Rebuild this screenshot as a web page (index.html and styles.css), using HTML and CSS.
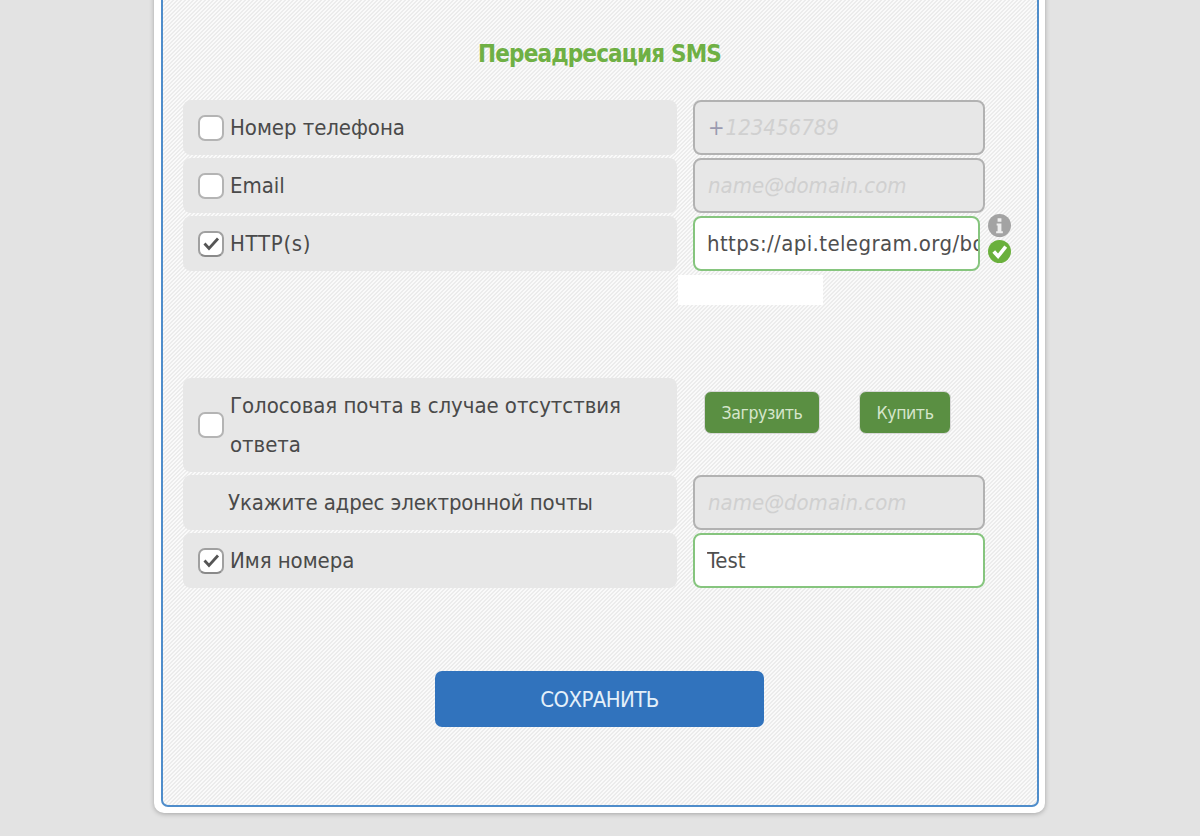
FILE: index.html
```html
<!DOCTYPE html>
<html lang="ru">
<head>
<meta charset="utf-8">
<title>Переадресация SMS</title>
<link rel="stylesheet" href="styles.css">
</head>
<body>
<main class="card">
  <div class="panel">
    <h1 class="title">Переадресация SMS</h1>
    <section class="rows">
      <div class="row">
        <label class="label"><span class="check"></span>Номер телефона</label>
        <div class="field"><div class="input off"><span class="plus">+</span><span class="ph">123456789</span></div></div>
      </div>
      <div class="row">
        <label class="label"><span class="check"></span>Email</label>
        <div class="field"><div class="input off"><span class="ph">name@domain.com</span></div></div>
      </div>
      <div class="row">
        <label class="label"><span class="check checked"><svg viewBox="0 0 26 26" class="tick"><path d="M6.500 12.500l4.500 5 9-10" fill="none" stroke="#555" stroke-width="2.800"/></svg></span><span class="wide">HTTP(s)</span></label>
        <div class="field">
          <div class="input on short"><span class="clip url">https://api.telegram.org/bot</span></div>
          <div class="status">
            <svg class="ic" viewBox="0 0 24 24"><circle cx="12" cy="12" r="12" fill="#a3a3a3"/><path d="M10 4.500h4v3.600h-4zM9 10h5v8h1.500v2h-7v-2H10v-6H9z" fill="#eee"/></svg>
            <svg class="ic" viewBox="0 0 24 24"><circle cx="12" cy="12" r="12" fill="#6ab03c"/><path d="M6 12l4.500 5L18.500 7" fill="none" stroke="#fff" stroke-width="3.800"/></svg>
          </div>
        </div>
      </div>
    </section>
    <div class="patch"></div>
    <section class="rows lower">
      <div class="row">
        <label class="label tall"><span class="check"></span><span>Голосовая почта в случае отсутствия ответа</span></label>
        <div class="actions">
          <button class="small load">Загрузить</button>
          <button class="small buy">Купить</button>
        </div>
      </div>
      <div class="row">
        <label class="label plain">Укажите адрес электронной почты</label>
        <div class="field"><div class="input off"><span class="ph">name@domain.com</span></div></div>
      </div>
      <div class="row">
        <label class="label"><span class="check checked"><svg viewBox="0 0 26 26" class="tick"><path d="M6.500 12.500l4.500 5 9-10" fill="none" stroke="#555" stroke-width="2.800"/></svg></span>Имя номера</label>
        <div class="field"><div class="input on"><span class="clip">Test</span></div></div>
      </div>
    </section>
    <div class="save-wrap"><button class="save">СОХРАНИТЬ</button></div>
  </div>
</main>
</body>
</html>
```
FILE: styles.css
```css
* { box-sizing: border-box; }
html, body { height: 836px; overflow: hidden; }
body {
  margin: 0;
  background: #e3e3e3;
  font-family: "DejaVu Sans Condensed", "DejaVu Sans", sans-serif;
  color: #4a4a4a;
}
.card {
  width: 891px;
  height: 833px;
  margin: -20px 0 0 154px;
  padding: 7px 6px 6px 7px;
  background: #fff;
  border-radius: 10px;
  box-shadow: 0 1px 5px rgba(0,0,0,.28);
}
.panel {
  height: 100%;
  padding: 0 21px 0 20px;
  border: 2px solid #4f8dcb;
  border-radius: 7px;
  background-color: #fafafa;
  background-image: linear-gradient(135deg, #ececec 25%, #fafafa 25%, #fafafa 50%, #ececec 50%, #ececec 75%, #fafafa 75%);
  background-size: 4px 4px;
}
.title {
  margin: 0;
  padding-top: 48px;
  height: 111px;
  font-size: 24px;
  line-height: 34px;
  font-weight: bold;
  text-align: center;
  color: #6fb044;
  letter-spacing: -.85px;
}
.rows { display: flex; flex-direction: column; gap: 3px; }
.lower { margin-top: 73px; }
.row { display: flex; gap: 16px; min-height: 55px; }
.label {
  width: 494px;
  flex: none;
  min-height: 55px;
  display: flex;
  align-items: center;
  gap: 6px;
  padding-left: 15px;
  padding-right: 40px;
  border-radius: 8px;
  background: #e7e7e7;
  font-size: 22px;
  line-height: 39px;
  letter-spacing: -.05px;
}
.tall { padding-top: 8px; padding-bottom: 8px; }
.plain { padding-left: 45px; letter-spacing: -.15px; }
.wide { letter-spacing: .7px; }
.check {
  flex: none;
  position: relative;
  width: 26px;
  height: 26px;
  background: #fff;
  border: 2px solid #b4b4b4;
  border-radius: 7px;
}
.checked { border-color: #a0a0a0; border-bottom-color: #8a8a8a; }
.tick { position: absolute; left: -2px; top: -2px; width: 26px; height: 26px; }
.field { display: flex; align-items: flex-start; width: 292px; }
.input {
  width: 292px;
  height: 55px;
  display: flex;
  align-items: center;
  border-radius: 8px;
  font-size: 22px;
  white-space: nowrap;
}
.off { padding: 0 13px; background: #e7e7e7; border: 2px solid #b2b2b2; }
.on { padding: 0 12px; background: #fff; border: 2px solid #86c57e; color: #4f4f4f; }
.short { width: 287px; flex: none; padding-right: 0; }
.clip { display: block; overflow: hidden; width: 100%; }
.url { letter-spacing: .4px; }
.ph { color: #d0d0d0; font-style: italic; }
.plus { color: #9a9ab0; margin-right: 1px; }
.status { flex: none; width: 23px; margin: -2px 0 0 8px; display: flex; flex-direction: column; gap: 3px; }
.ic { display: block; width: 23px; height: 23px; }
.patch {
  width: 145px;
  height: 30px;
  margin: 4px 0 0 495px;
  background: #fff;
}
.actions { display: flex; align-items: flex-start; padding: 13px 0 0 11px; gap: 39px; }
.small {
  height: 43px;
  padding: 0;
  border: 1px solid #d8d8d8;
  border-radius: 7px;
  background: #5a8f42;
  color: #d6e6cc;
  font: 17.500px "DejaVu Sans Condensed", "DejaVu Sans", sans-serif;
  letter-spacing: -.4px;
}
.load { width: 116px; }
.buy { width: 92px; }
.save-wrap { display: flex; justify-content: center; margin-top: 83px; }
.save {
  width: 329px;
  height: 56px;
  border: 0;
  border-radius: 7px;
  background: #3173bd;
  color: #e4f0fa;
  font: 22px "DejaVu Sans Condensed", "DejaVu Sans", sans-serif;
  letter-spacing: -.6px;
}
```
